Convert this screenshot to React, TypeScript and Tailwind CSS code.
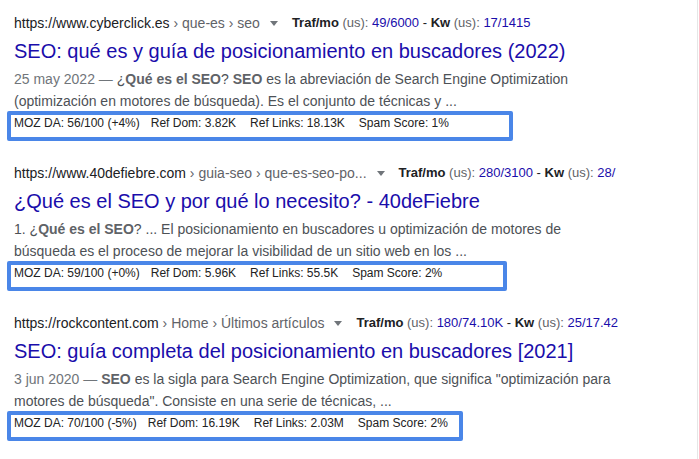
import React from 'react';

type Result = {
  domain: string;
  crumbs: string;
  traf: string;
  kw: string;
  title: string;
  lines: React.ReactNode[];
  moz: string;
  dom: string;
  links: string;
  spam: string;
  boxW: string;
};

const B = ({ children }: { children: React.ReactNode }) => (
  <b className="font-bold text-[#5f6368]">{children}</b>
);

const Date = ({ children }: { children: React.ReactNode }) => (
  <span className="text-[#70757a]">{children}</span>
);

const results: Result[] = [
  {
    domain: 'https://www.cyberclick.es',
    crumbs: ' › que-es › seo',
    traf: '49/6000',
    kw: '17/1415',
    title: 'SEO: qué es y guía de posicionamiento en buscadores (2022)',
    lines: [
      <>
        <Date>25 may 2022 — </Date>¿<B>Qué es el SEO</B>? <B>SEO</B> es la abreviación de Search Engine Optimization
      </>,
      <>(optimización en motores de búsqueda). Es el conjunto de técnicas y ...</>,
    ],
    moz: '56/100 (+4%)',
    dom: '3.82K',
    links: '18.13K',
    spam: '1%',
    boxW: 'w-[506px]',
  },
  {
    domain: 'https://www.40defiebre.com',
    crumbs: ' › guia-seo › que-es-seo-po...',
    traf: '280/3100',
    kw: '28/',
    title: '¿Qué es el SEO y por qué lo necesito? - 40deFiebre',
    lines: [
      <>
        1. ¿<B>Qué es el SEO</B>? ... El posicionamiento en buscadores u optimización de motores de
      </>,
      <>búsqueda es el proceso de mejorar la visibilidad de un sitio web en los ...</>,
    ],
    moz: '59/100 (+0%)',
    dom: '5.96K',
    links: '55.5K',
    spam: '2%',
    boxW: 'w-[500px]',
  },
  {
    domain: 'https://rockcontent.com',
    crumbs: ' › Home › Últimos artículos',
    traf: '180/74.10K',
    kw: '25/17.42',
    title: 'SEO: guía completa del posicionamiento en buscadores [2021]',
    lines: [
      <>
        <Date>3 jun 2020 — </Date>
        <B>SEO</B> es la sigla para Search Engine Optimization, que significa "optimización para
      </>,
      <>motores de búsqueda". Consiste en una serie de técnicas, ...</>,
    ],
    moz: '70/100 (-5%)',
    dom: '16.19K',
    links: '2.03M',
    spam: '2%',
    boxW: 'w-[456px]',
  },
];

function ResultItem({ r }: { r: Result }) {
  return (
    <div className="flex flex-col">
      <div className="flex items-center whitespace-pre text-[14px] leading-[20px] h-[20px]">
        <span className="text-[#202124]">{r.domain}</span>
        <span className="text-[#5f6368]">{r.crumbs}</span>
        <svg className="ml-[10px] mr-[14px] shrink-0" width="8" height="5" viewBox="0 0 8 5">
          <path d="M0 0h8L4 5z" fill="#70757a" />
        </svg>
        <span className="text-[13px] text-[#202124] font-bold">Traf/mo</span>
        <span className="text-[13px] text-[#5f6368]"> (us): </span>
        <span className="text-[13px] text-[#1a0dab]">{r.traf}</span>
        <span className="text-[13px] text-[#202124]"> - </span>
        <span className="text-[13px] text-[#202124] font-bold">Kw</span>
        <span className="text-[13px] text-[#5f6368]"> (us): </span>
        <span className="text-[13px] text-[#1a0dab]">{r.kw}</span>
      </div>
      <h3 className="mt-[5px] text-[20px] leading-[26px] text-[#1a0dab] whitespace-nowrap">{r.title}</h3>
      <div className="mt-[4px] text-[14px] leading-[22px] text-[#4d5156] whitespace-nowrap">
        {r.lines.map((l, i) => (
          <div key={i}>{l}</div>
        ))}
      </div>
      <div
        className={`-mt-[1px] -ml-[7px] ${r.boxW} h-[30px] border-4 border-[#4a86e8] rounded-[2px] pl-[3px] pb-[6px] flex items-start text-[12px] leading-[16px] text-[#222] whitespace-nowrap`}
      >
        <span className="mr-[11px]">MOZ DA: {r.moz}</span>
        <span className="mr-[14px]">Ref Dom: {r.dom}</span>
        <span className="mr-[14px]">Ref Links: {r.links}</span>
        <span>Spam Score: {r.spam}</span>
      </div>
    </div>
  );
}

export default function App() {
  return (
    <div className="w-[699px] h-[459px] bg-white overflow-hidden font-['Liberation_Sans',Arial,sans-serif]">
      <div className="w-[698px] h-full border-r border-[#e6e6e6] pl-[14px] pt-[13px] flex flex-col gap-[22px]">
        {results.map((r, i) => (
          <ResultItem key={i} r={r} />
        ))}
      </div>
    </div>
  );
}
